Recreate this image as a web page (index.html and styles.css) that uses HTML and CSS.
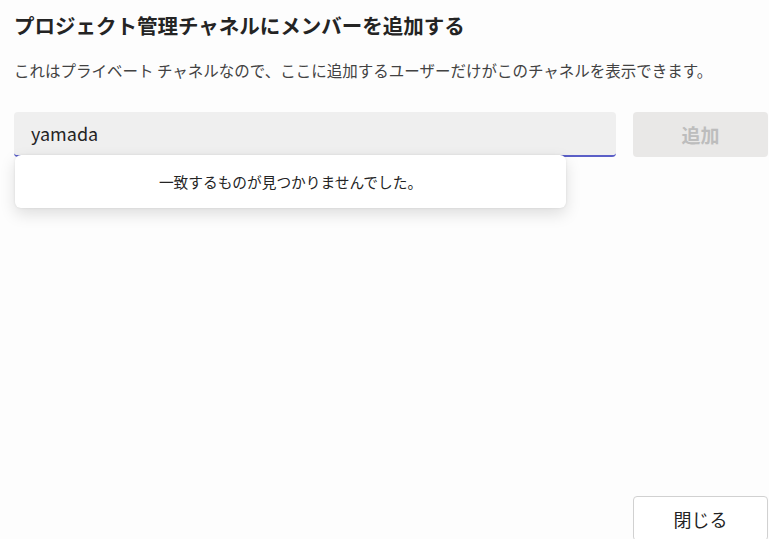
FILE: index.html
```html
<!DOCTYPE html>
<html lang="ja">
<head>
    <meta charset="UTF-8">
    <meta name="viewport" content="width=device-width, initial-scale=1.0">
    <title>メンバーを追加</title>
    <link rel="stylesheet" href="styles.css">
</head>
<body>
    <div class="dialog">
        <h1 class="title">プロジェクト管理チャネルにメンバーを追加する</h1>
        <p class="desc">これはプライベート チャネルなので、ここに追加するユーザーだけがこのチャネルを表示できます。</p>

        <div class="search-row">
            <div class="search">
                <div class="search-box">yamada</div>
                <div class="dropdown">一致するものが見つかりませんでした。</div>
            </div>
            <button class="btn-add" disabled>追加</button>
        </div>

        <div class="footer">
            <button class="btn-close">閉じる</button>
        </div>
    </div>
</body>
</html>
```

FILE: styles.css
```css
body {
    margin: 0;
    background-color: #fdfdfd;
    font-family: 'Noto Sans CJK JP', 'Noto Sans', sans-serif;
    color: #242424;
    overflow: hidden;
}

.dialog {
    height: 539px;
    padding: 0 1px 0 14px;
    box-sizing: border-box;
    display: flex;
    flex-direction: column;
}

.title {
    font-size: 20.5px;
    font-weight: 700;
    margin: 9px 0 0 0;
    line-height: 32px;
}

.desc {
    font-size: 15.5px;
    margin: 17px 0 0 0;
    line-height: 24px;
    color: #424242;
}

.search-row {
    display: flex;
    gap: 17px;
    margin-top: 30px;
}

.search {
    position: relative;
    flex: 1;
}

.search-box {
    height: 43px;
    background-color: #efefef;
    border-radius: 4px;
    border-bottom: 2px solid #5b5fc7;
    box-sizing: content-box;
    padding-left: 17px;
    font-size: 18px;
    line-height: 43px;
    color: #242424;
}

.dropdown {
    position: absolute;
    top: 43px;
    left: 1px;
    width: 551px;
    height: 53px;
    background-color: #fff;
    border-radius: 6px;
    box-shadow: 0 6px 16px rgba(0, 0, 0, 0.13), 0 0 3px rgba(0, 0, 0, 0.08);
    font-size: 14.7px;
    line-height: 53px;
    text-align: center;
    color: #242424;
}

.btn-add {
    width: 135px;
    height: 45px;
    border: none;
    border-radius: 4px;
    background-color: #e9e8e7;
    color: #bdbdbd;
    font-family: inherit;
    font-size: 19px;
    font-weight: 700;
}

.footer {
    margin-top: auto;
    display: flex;
    justify-content: flex-end;
}

.btn-close {
    width: 135px;
    height: 45px;
    margin-bottom: -2px;
    border: 1px solid #d1d1d1;
    border-radius: 4px;
    background-color: #fff;
    color: #242424;
    font-family: inherit;
    font-size: 18px;
}
```
